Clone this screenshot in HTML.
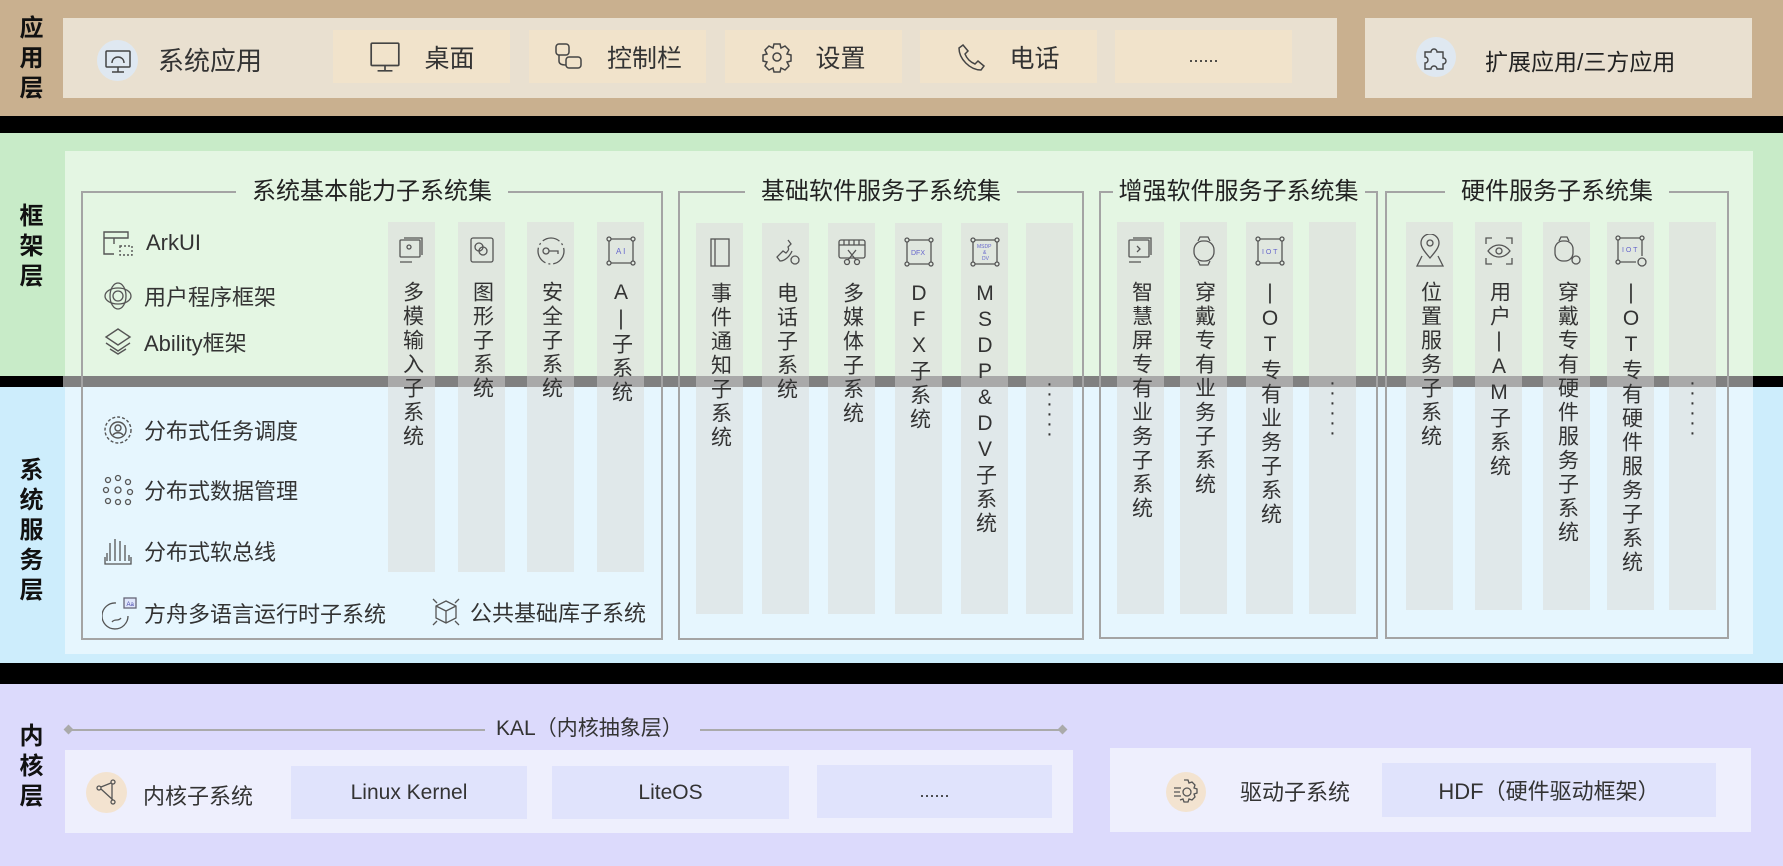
<!DOCTYPE html>
<html><head><meta charset="utf-8"><style>
*{margin:0;padding:0;box-sizing:border-box}
body{width:1783px;height:866px;position:relative;overflow:hidden;background:#000;font-family:"Liberation Sans","Noto Sans CJK SC",sans-serif;color:#333}
.a{position:absolute}
.lbl{position:absolute;left:0;width:63px;font-weight:bold;font-size:24px;color:#111;text-align:center;line-height:30px}
.tile{position:absolute;top:30px;height:53px;width:177px;background:#f1e3cb;font-size:25px;display:flex;align-items:center;justify-content:center;gap:22px;color:#333}
.grp{position:absolute;border:2px solid #a4a4a4;border-top-width:2px}
.gt{position:absolute;top:-16px;left:0;right:0;text-align:center;font-size:24px;line-height:30px;color:#222}
.gt span{padding:0 16px}
.col{position:absolute;width:47px;display:flex;flex-direction:column;align-items:center}
.vt{writing-mode:vertical-rl;text-orientation:upright;font-size:21px;letter-spacing:3px;color:#333;margin-top:13px;line-height:22px}
.it{position:absolute;font-size:22px;color:#333;display:flex;align-items:center;gap:16px;white-space:nowrap}
svg{flex:none}
.kt{position:absolute;background:#e0e3fc;font-size:21px;color:#333;display:flex;align-items:center;justify-content:center}
</style></head><body>
<div class="a" style="left:0;top:0;width:1783px;height:116px;background:#c9b08f"></div>
<div class="lbl" style="top:14px">应<br>用<br>层</div>
<div class="a" style="left:63px;top:18px;width:1274px;height:80px;background:#e9e0d0"></div>
<div class="a" style="left:1365px;top:18px;width:387px;height:80px;background:#e9e0d0"></div>
<div class="a" style="left:97px;top:40px;width:41px;height:41px;border-radius:50%;background:#dfe8f1"></div>
<svg class="a" style="left:103px;top:46px" width="30" height="30" viewBox="0 0 30 30" fill="none" stroke="#444" stroke-width="1.5"><rect x="3" y="5" width="24" height="16" rx="1"/><path d="M15 21v5M9 26h12M9 17c0-4 3-6 6-6s6 2 6 6"/></svg>
<div class="a" style="left:158px;top:41px;font-size:26px;color:#333">系统应用</div>
<div class="tile" style="left:333px"><svg width="34" height="34" viewBox="0 0 32 32" fill="none" stroke="#444" stroke-width="1.6"><rect x="3" y="3" width="26" height="21" rx="1"/><path d="M16 24v5M9 29h14"/></svg>桌面</div>
<div class="tile" style="left:529px"><svg width="32" height="32" viewBox="0 0 32 32" fill="none" stroke="#444" stroke-width="1.5"><rect x="3" y="3" width="13" height="11" rx="3"/><rect x="13" y="16" width="15" height="11" rx="3"/><path d="M6 14v6c0 3 3 4 7 4"/></svg>控制栏</div>
<div class="tile" style="left:725px"><svg width="32" height="32" viewBox="0 0 32 32" fill="none" stroke="#444" stroke-width="1.5"><path d="M13 3h6l1 4 4-2 4 4-2 4 4 1v6l-4 1 2 4-4 4-4-2-1 4h-6l-1-4-4 2-4-4 2-4-4-1v-6l4-1-2-4 4-4 4 2z"/><circle cx="16" cy="16" r="4"/></svg>设置</div>
<div class="tile" style="left:920px"><svg width="30" height="30" viewBox="0 0 30 30" fill="none" stroke="#444" stroke-width="1.5"><path d="M6 3l5 6-3 3c2 5 5 8 10 10l3-3 6 5-3 4C13 28 2 17 2 6z"/></svg>电话</div>
<div class="tile" style="left:1115px;font-size:18px">......</div>
<div class="a" style="left:1416px;top:37px;width:40px;height:40px;border-radius:50%;background:#dfe8f1"></div>
<svg class="a" style="left:1421px;top:42px" width="30" height="30" viewBox="0 0 30 30" fill="none" stroke="#444" stroke-width="1.4"><path d="M4 10h6a3 3 0 1 1 6 0h6v6a3 3 0 1 1 0 6v5h-6a3 3 0 1 0-6 0H4v-6a3 3 0 1 0 0-6z"/></svg>
<div class="a" style="left:1485px;top:43px;font-size:23px;color:#222">扩展应用/三方应用</div>

<div class="a" style="left:0;top:133px;width:1783px;height:243px;background:#c8ebc8"></div>
<div class="a" style="left:0;top:387px;width:1783px;height:276px;background:#cdedfc"></div>
<div class="a" style="left:65px;top:151px;width:1688px;height:225px;background:#e4f6e3"></div>
<div class="a" style="left:65px;top:387px;width:1688px;height:267px;background:#e6f6fe"></div>
<div class="a" style="left:0;top:376px;width:1783px;height:11px;background:#000"></div>
<div class="a" style="left:63px;top:376px;width:1690px;height:11px;background:#808080"></div>
<div class="lbl" style="top:202px">框<br>架<br>层</div>
<div class="lbl" style="top:456px">系<br>统<br>服<br>务<br>层</div>

<div class="grp" style="left:81px;top:191px;width:582px;height:449px"><div class="gt"><span style="background:#e4f6e3">系统基本能力子系统集</span></div></div>
<div class="grp" style="left:678px;top:191px;width:406px;height:449px"><div class="gt"><span style="background:#e4f6e3">基础软件服务子系统集</span></div></div>
<div class="grp" style="left:1099px;top:191px;width:279px;height:448px"><div class="gt"><span style="background:#e4f6e3;padding:0 6px">增强软件服务子系统集</span></div></div>
<div class="grp" style="left:1385px;top:191px;width:344px;height:448px"><div class="gt"><span style="background:#e4f6e3">硬件服务子系统集</span></div></div>

<div class="it" style="left:102px;top:228px"><svg width="34" height="30" viewBox="0 0 34 30" fill="none" stroke="#555" stroke-width="1.4"><path d="M2 4h24v6H2zM2 10v16h10M12 10v6"/><rect x="18" y="18" width="12" height="9" stroke-dasharray="2 2"/></svg><span style="margin-left:-6px">ArkUI</span></div>
<div class="it" style="left:102px;top:280px"><svg width="32" height="32" viewBox="0 0 32 32" fill="none" stroke="#555" stroke-width="1.3"><ellipse cx="16" cy="16" rx="13" ry="8"/><ellipse cx="16" cy="16" rx="8" ry="13"/><circle cx="16" cy="16" r="5"/></svg><span style="margin-left:-6px">用户程序框架</span></div>
<div class="it" style="left:102px;top:326px"><svg width="32" height="32" viewBox="0 0 32 32" fill="none" stroke="#555" stroke-width="1.4"><path d="M16 3l12 8-12 8-12-8zM4 17l12 8 12-8M8 23l8 5 8-5"/></svg><span style="margin-left:-6px">Ability框架</span></div>
<div class="it" style="left:102px;top:414px"><svg width="32" height="32" viewBox="0 0 32 32" fill="none" stroke="#555" stroke-width="1.4"><circle cx="16" cy="16" r="13" stroke-dasharray="3 2"/><circle cx="16" cy="16" r="8"/><circle cx="16" cy="14" r="3"/><path d="M11 21c2-3 8-3 10 0"/></svg><span style="margin-left:-6px">分布式任务调度</span></div>
<div class="it" style="left:102px;top:474px"><svg width="32" height="32" viewBox="0 0 32 32" fill="none" stroke="#555" stroke-width="1.3"><circle cx="6" cy="6" r="2.5"/><circle cx="16" cy="4" r="2.5"/><circle cx="26" cy="8" r="2.5"/><circle cx="4" cy="16" r="2.5"/><circle cx="16" cy="16" r="3"/><circle cx="28" cy="18" r="2.5"/><circle cx="6" cy="27" r="2.5"/><circle cx="16" cy="28" r="2.5"/><circle cx="26" cy="28" r="2.5"/></svg><span style="margin-left:-6px">分布式数据管理</span></div>
<div class="it" style="left:102px;top:535px"><svg width="32" height="32" viewBox="0 0 32 32" fill="none" stroke="#555" stroke-width="1.3"><path d="M3 22v7h26v-7M8 26V8M13 26V4M18 26V6M23 26V10M5 26v-8M27 26v-6"/></svg><span style="margin-left:-6px">分布式软总线</span></div>
<div class="it" style="left:102px;top:596px"><svg width="36" height="34" viewBox="0 0 36 34" fill="none" stroke="#555" stroke-width="1.3"><path d="M14 7a13 13 0 1 0 12 13" /><path d="M10 26c3-4 6 0 9-4"/><rect x="22" y="2" width="12" height="10" fill="#dfe6fb" stroke="#667"/><text x="24.5" y="10" font-size="6" fill="#44a" stroke="none" font-family="Liberation Sans">Aa</text></svg><span style="margin-left:-10px">方舟多语言运行时子系统</span></div>
<div class="it" style="left:430px;top:596px"><svg width="32" height="32" viewBox="0 0 32 32" fill="none" stroke="#555" stroke-width="1.3"><path d="M16 5l10 5v12l-10 5-10-5V10zM6 10l10 5 10-5M16 15v12M3 3l4 4M29 3l-4 4M3 29l4-4M29 29l-4-4"/></svg><span style="margin-left:-8px">公共基础库子系统</span></div>

<div id="cols"></div>
<script>
var S='stroke="#555" fill="none" stroke-width="1.3"';
var ic={
mm:'<svg width="30" height="32" viewBox="0 0 30 32" '+S+'><rect x="3" y="5" width="20" height="17" rx="1"/><path d="M7 3h18v17M3 27h12"/><circle cx="12" cy="12" r="2"/></svg>',
tx:'<svg width="30" height="32" viewBox="0 0 30 32" '+S+'><rect x="4" y="3" width="22" height="24" rx="2"/><circle cx="12" cy="12" r="4"/><circle cx="16" cy="16" r="4"/></svg>',
aq:'<svg width="32" height="32" viewBox="0 0 32 32" '+S+'><circle cx="16" cy="16" r="13" stroke-dasharray="18 3 2 3"/><circle cx="11" cy="16" r="3"/><path d="M14 16h9v3"/></svg>',
ai:'<svg width="32" height="32" viewBox="0 0 32 32" '+S+'><circle cx="4" cy="4" r="2"/><circle cx="28" cy="4" r="2"/><circle cx="4" cy="28" r="2"/><circle cx="28" cy="28" r="2"/><path d="M6 4h20M4 6v20M6 28h20M28 6v20"/><text x="11" y="19" font-size="8" fill="#66c" stroke="none">A I</text></svg>',
sj:'<svg width="30" height="32" viewBox="0 0 30 32" '+S+'><rect x="6" y="3" width="18" height="27"/><path d="M10 3v27"/></svg>',
dh:'<svg width="32" height="32" viewBox="0 0 32 32" '+S+'><path d="M18 4l3 4-3 3c1 2 1 3-2 6l-3-2-6 6 3 4c5 0 10-5 12-10"/><circle cx="25" cy="24" r="4"/></svg>',
dm:'<svg width="32" height="32" viewBox="0 0 32 32" '+S+'><rect x="3" y="4" width="26" height="18" rx="2"/><path d="M3 9h26M8 4v5M13 4v5M18 4v5M23 4v5M12 14l8 10M20 14l-8 10"/><circle cx="11" cy="26" r="2.5"/><circle cx="21" cy="26" r="2.5"/></svg>',
df:'<svg width="32" height="32" viewBox="0 0 32 32" '+S+'><circle cx="4" cy="4" r="2"/><circle cx="28" cy="4" r="2"/><circle cx="4" cy="28" r="2"/><circle cx="28" cy="28" r="2"/><path d="M6 4h20M4 6v20M6 28h20M28 6v20"/><text x="8" y="19" font-size="7" fill="#66c" stroke="none">DFX</text></svg>',
ms:'<svg width="32" height="32" viewBox="0 0 32 32" '+S+'><circle cx="4" cy="4" r="2"/><circle cx="28" cy="4" r="2"/><circle cx="4" cy="28" r="2"/><circle cx="28" cy="28" r="2"/><path d="M6 4h20M4 6v20M6 28h20M28 6v20"/><text x="8" y="12" font-size="5" fill="#66c" stroke="none">MSDP</text><text x="14" y="18" font-size="5" fill="#66c" stroke="none">&amp;</text><text x="13" y="24" font-size="5" fill="#66c" stroke="none">DV</text></svg>',
zh:'<svg width="30" height="32" viewBox="0 0 30 32" '+S+'><rect x="3" y="5" width="20" height="17" rx="1"/><path d="M7 3h18v17M3 27h12M11 11l3 3-3 3"/></svg>',
cd:'<svg width="30" height="32" viewBox="0 0 30 32" '+S+'><rect x="5" y="6" width="20" height="20" rx="9"/><path d="M9 6l2-4h8l2 4M9 26l2 4h8l2-4"/></svg>',
io:'<svg width="32" height="32" viewBox="0 0 32 32" '+S+'><circle cx="4" cy="4" r="2"/><circle cx="28" cy="4" r="2"/><circle cx="4" cy="28" r="2"/><circle cx="28" cy="28" r="2"/><path d="M6 4h20M4 6v20M6 28h20M28 6v20"/><text x="8" y="19" font-size="7" fill="#66c" stroke="none">I O T</text></svg>',
wz:'<svg width="32" height="34" viewBox="0 0 32 34" '+S+'><path d="M16 24c-6-7-9-11-9-15a9 9 0 0 1 18 0c0 4-3 8-9 15z"/><circle cx="16" cy="9" r="3"/><path d="M8 22l-5 10h26l-5-10"/></svg>',
yh:'<svg width="32" height="32" viewBox="0 0 32 32" '+S+'><path d="M3 9V3h6M23 3h6v6M3 23v6h6M29 23v6h-6M5 16c6-8 16-8 22 0-6 8-16 8-22 0z"/><circle cx="16" cy="16" r="3"/></svg>',
cy:'<svg width="32" height="32" viewBox="0 0 32 32" '+S+'><rect x="4" y="6" width="18" height="20" rx="8"/><path d="M8 6l2-4h6l2 4"/><circle cx="25" cy="25" r="4"/></svg>',
iy:'<svg width="34" height="34" viewBox="0 0 34 34" '+S+'><circle cx="4" cy="4" r="2"/><circle cx="28" cy="4" r="2"/><circle cx="4" cy="28" r="2"/><path d="M6 4h20M4 6v20M6 28h16M28 6v16"/><circle cx="28" cy="28" r="4"/><text x="8" y="18" font-size="7" fill="#66c" stroke="none">I O T</text></svg>'
};
var cols=[
[388,222,572,'mm','多模输入子系统'],[458,222,572,'tx','图形子系统'],[527,222,572,'aq','安全子系统'],[597,222,572,'ai','AI子系统'],
[696,223,614,'sj','事件通知子系统'],[762,223,614,'dh','电话子系统'],[828,223,614,'dm','多媒体子系统'],[895,223,614,'df','DFX子系统'],[961,223,614,'ms','MSDP&DV子系统'],[1026,223,614,'',''],
[1117,222,614,'zh','智慧屏专有业务子系统'],[1180,222,614,'cd','穿戴专有业务子系统'],[1246,222,614,'io','IOT专有业务子系统'],[1309,222,614,'',''],
[1406,222,610,'wz','位置服务子系统'],[1475,222,610,'yh','用户IAM子系统'],[1543,222,610,'cy','穿戴专有硬件服务子系统'],[1607,222,610,'iy','IOT专有硬件服务子系统'],[1669,222,610,'','']
];
var h='';
cols.forEach(function(c){
 var t0=376-c[1],t1=387-c[1];
 var bg='linear-gradient(#e0e7df 0,#e0e7df '+t0+'px,#a9a9a9 '+t0+'px,#a9a9a9 '+t1+'px,#e0e8ea '+t1+'px)';
 var inner;
 if(c[3]){ inner='<div style="height:34px;margin-top:12px;display:flex;align-items:center">'+ic[c[3]]+'</div><div class="vt">'+c[4].replace(/I/g,'|')+'</div>'; }
 else inner='<div style="margin-top:156px;font-size:20px;line-height:10px;text-align:center;color:#333">·<br>·<br>·<br>·<br>·<br>·</div>';
 h+='<div class="col" style="left:'+c[0]+'px;top:'+c[1]+'px;height:'+(c[2]-c[1])+'px;background:'+bg+'">'+inner+'</div>';
});
document.getElementById('cols').innerHTML=h;
</script>

<div class="a" style="left:0;top:684px;width:1783px;height:182px;background:#dcdafc"></div>
<div class="lbl" style="top:722px">内<br>核<br>层</div>
<div class="a" style="left:70px;top:729px;width:415px;height:2px;background:#aaa"></div>
<div class="a" style="left:700px;top:729px;width:363px;height:2px;background:#aaa"></div>
<div class="a" style="left:65px;top:726px;width:7px;height:7px;background:#aaa;transform:rotate(45deg)"></div>
<div class="a" style="left:1059px;top:726px;width:7px;height:7px;background:#aaa;transform:rotate(45deg)"></div>
<div class="a" style="left:496px;top:712px;font-size:21px;color:#333">KAL（内核抽象层）</div>
<div class="a" style="left:65px;top:750px;width:1008px;height:83px;background:#eeeffd"></div>
<div class="a" style="left:1110px;top:748px;width:641px;height:84px;background:#eeeffd"></div>
<div class="a" style="left:86px;top:772px;width:41px;height:41px;border-radius:50%;background:#f3e3d0"></div>
<svg class="a" style="left:93px;top:778px" width="28" height="28" viewBox="0 0 28 28" fill="none" stroke="#555" stroke-width="1.3"><circle cx="6" cy="10" r="2"/><circle cx="20" cy="4" r="2"/><circle cx="20" cy="24" r="2"/><path d="M8 11l12 11M19 6v16M8 9l10-4"/></svg>
<div class="a" style="left:143px;top:779px;font-size:22px;color:#333">内核子系统</div>
<div class="kt" style="left:291px;top:766px;width:236px;height:53px">Linux Kernel</div>
<div class="kt" style="left:552px;top:766px;width:237px;height:53px">LiteOS</div>
<div class="kt" style="left:817px;top:765px;width:235px;height:53px;font-size:18px">......</div>
<div class="a" style="left:1166px;top:772px;width:40px;height:40px;border-radius:50%;background:#f3e3d0"></div>
<svg class="a" style="left:1172px;top:778px" width="28" height="28" viewBox="0 0 28 28" fill="none" stroke="#555" stroke-width="1.3"><path d="M12 2h4l1 3 3-1 3 3-1 3 3 1v4l-3 1 1 3-3 3-3-1-1 3h-4l-1-3-3 1"/><circle cx="15" cy="14" r="4"/><path d="M2 10h7M2 14h6M2 18h7"/></svg>
<div class="a" style="left:1240px;top:775px;font-size:22px;color:#333">驱动子系统</div>
<div class="kt" style="left:1382px;top:763px;width:334px;height:54px;font-size:22px">HDF（硬件驱动框架）</div>
</body></html>
